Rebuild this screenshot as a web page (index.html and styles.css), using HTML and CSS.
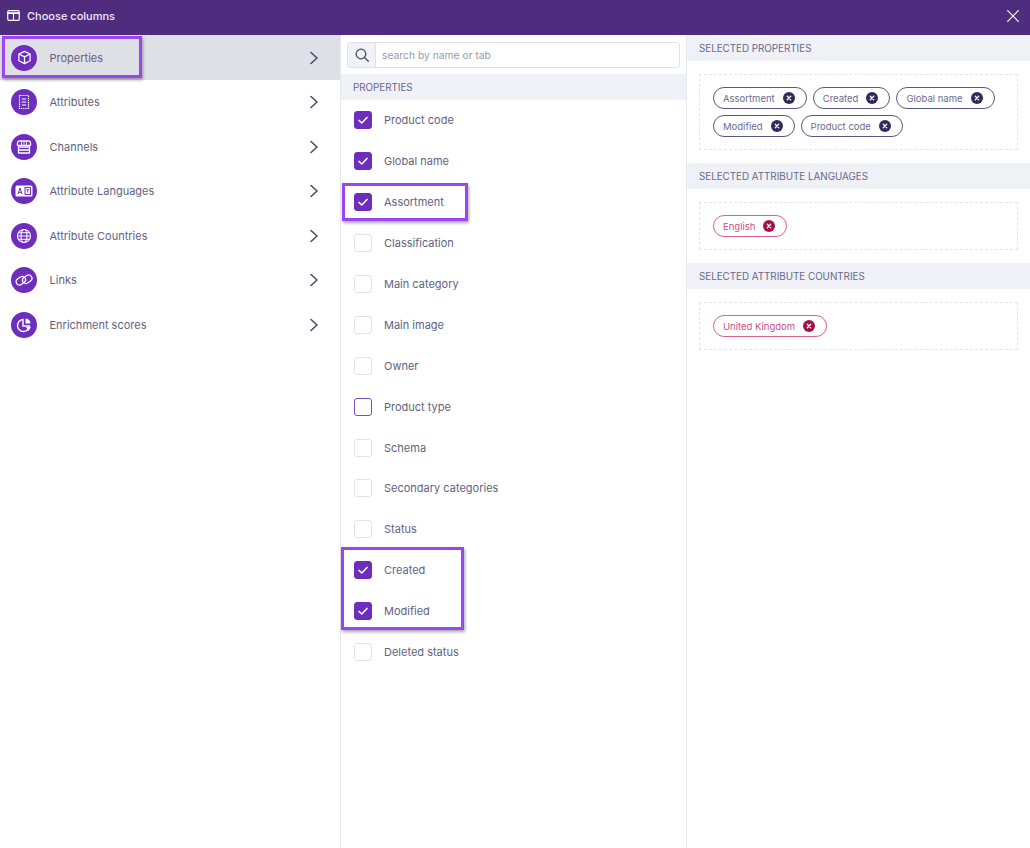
FILE: index.html
```html
<!DOCTYPE html>
<html lang="en">

<head>
    <meta charset="UTF-8">
    <meta name="viewport" content="width=device-width, initial-scale=1.0">
    <title>Choose columns</title>
    <link rel="stylesheet" href="styles.css">
</head>

<body>
    <svg class="sprite" width="0" height="0">
        <defs>
            <symbol id="check" viewBox="0 0 18 18">
                <path d="M5 9.4l2.8 2.6L13 6.4" fill="none" stroke="#fff" stroke-width="1.5" stroke-linecap="round" stroke-linejoin="round"/>
            </symbol>
            <symbol id="chevron" viewBox="0 0 10 14">
                <path d="M2 1.5L8 7l-6 5.5" fill="none" stroke="#4a4a6e" stroke-width="1.6" stroke-linecap="round" stroke-linejoin="round"/>
            </symbol>
            <symbol id="chip-x" viewBox="0 0 12 12">
                <circle cx="6" cy="6" r="6" fill="currentColor"/>
                <path d="M4.3 4.3l3.4 3.4M7.7 4.3L4.3 7.7" stroke="#fff" stroke-width="1.3" stroke-linecap="round"/>
            </symbol>
        </defs>
    </svg>

    <header class="top-bar">
        <div class="top-title">
            <svg class="top-icon" viewBox="0 0 14 12" width="13" height="11">
                <rect x="0.7" y="0.7" width="12.6" height="10.6" rx="1.5" fill="none" stroke="#fff" stroke-width="1.3"/>
                <path d="M0.7 3.4h12.6" stroke="#fff" stroke-width="2"/>
                <path d="M7 3v8" stroke="#fff" stroke-width="1.2"/>
            </svg>
            <span>Choose columns</span>
        </div>
        <svg class="close-icon" viewBox="0 0 12 12" width="12" height="12">
            <path d="M0.7 0.7l10.6 10.6M11.3 0.7L0.7 11.3" stroke="#fff" stroke-width="1.2" stroke-linecap="round"/>
        </svg>
    </header>

    <main class="columns">
        <nav class="tabs">
            <a class="tab active">
                <span class="tab-icon">
                    <svg viewBox="0 0 16 16" width="15" height="15" fill="none" stroke="#fff" stroke-width="1.3" stroke-linejoin="round">
                        <path d="M8 1.5l6 2.8v7.2l-6 3-6-3V4.300z"/>
                        <path d="M2 4.300l6 3 6-3M8 7.300v7.200"/>
                    </svg>
                </span>
                <span class="tab-label">Properties</span>
                <svg class="tab-arrow"><use href="#chevron"/></svg>
            </a>
            <a class="tab">
                <span class="tab-icon">
                    <svg viewBox="0 0 16 16" width="16" height="16" fill="none" stroke="#fff" stroke-width="1.2">
                        <path d="M3.500 1.500h9v13h-9z" stroke-dasharray="1.200 0.700"/>
                        <path d="M5.800 5h4.400M5.800 8h4.400M5.800 11h4.400"/>
                    </svg>
                </span>
                <span class="tab-label">Attributes</span>
                <svg class="tab-arrow"><use href="#chevron"/></svg>
            </a>
            <a class="tab">
                <span class="tab-icon">
                    <svg viewBox="0 0 16 16" width="16" height="16" fill="none" stroke="#fff" stroke-width="1.3" stroke-linejoin="round">
                        <path d="M3.500 2h9a2 2 0 0 1 2 2v2.500h-13V4a2 2 0 0 1 2-2z"/>
                        <path d="M5.500 2.500v3.500M8 2.500v3.500M10.500 2.500v3.500" stroke-width="0.900"/>
                        <path d="M2.500 8h11v6h-11zM2.500 11h11"/>
                    </svg>
                </span>
                <span class="tab-label">Channels</span>
                <svg class="tab-arrow"><use href="#chevron"/></svg>
            </a>
            <a class="tab">
                <span class="tab-icon">
                    <svg viewBox="0 0 18 14" width="18" height="14">
                        <rect x="0.500" y="1.500" width="17" height="11" rx="1.500" fill="#fff"/>
                        <path d="M3 10l2-6 2 6M3.800 8.300h2.400" fill="none" stroke="#6f2dbd" stroke-width="1"/>
                        <rect x="10" y="3.500" width="5.500" height="7" fill="none" stroke="#6f2dbd" stroke-width="1"/>
                        <path d="M11.500 5.500h2.500M12.700 5.500v3" stroke="#6f2dbd" stroke-width="0.900"/>
                    </svg>
                </span>
                <span class="tab-label">Attribute Languages</span>
                <svg class="tab-arrow"><use href="#chevron"/></svg>
            </a>
            <a class="tab">
                <span class="tab-icon">
                    <svg viewBox="0 0 16 16" width="16" height="16" fill="none" stroke="#fff" stroke-width="1.100">
                        <circle cx="8" cy="8" r="6.500"/>
                        <ellipse cx="8" cy="8" rx="3" ry="6.500"/>
                        <path d="M1.500 8h13M2.500 4.700h11M2.500 11.300h11"/>
                    </svg>
                </span>
                <span class="tab-label">Attribute Countries</span>
                <svg class="tab-arrow"><use href="#chevron"/></svg>
            </a>
            <a class="tab">
                <span class="tab-icon">
                    <svg viewBox="0 0 18 16" width="18" height="16" fill="none" stroke="#fff" stroke-width="1.300">
                        <rect x="0.800" y="5.500" width="10" height="6.500" rx="3.250" transform="rotate(-35 5.800 8.750)"/>
                        <rect x="7.200" y="4" width="10" height="6.500" rx="3.250" transform="rotate(-35 12.200 7.250)"/>
                    </svg>
                </span>
                <span class="tab-label">Links</span>
                <svg class="tab-arrow"><use href="#chevron"/></svg>
            </a>
            <a class="tab">
                <span class="tab-icon">
                    <svg viewBox="0 0 16 16" width="16" height="16" fill="none" stroke="#fff" stroke-width="1.400">
                        <path d="M7 2.500a6 6 0 1 0 6.500 6.500H7z"/>
                        <path d="M9.500 1.500a5 5 0 0 1 5 5h-5z" fill="#fff" stroke="none"/>
                        <path d="M10 10h5l-2.500 4z" fill="#fff" stroke="none"/>
                    </svg>
                </span>
                <span class="tab-label">Enrichment scores</span>
                <svg class="tab-arrow"><use href="#chevron"/></svg>
            </a>
        </nav>

        <section class="options">
            <div class="search">
                <span class="search-addon">
                    <svg viewBox="0 0 14 14" width="14" height="14" fill="none" stroke="#4a4a5e" stroke-width="1.300">
                        <circle cx="6" cy="6" r="4.800"/>
                        <path d="M9.500 9.500l3.800 3.800" stroke-linecap="round"/>
                    </svg>
                </span>
                <input class="search-input" type="text" placeholder="search by name or tab">
            </div>
            <h3 class="section-head">PROPERTIES</h3>
            <ul class="option-list">
                <li class="option"><span class="box checked"><svg><use href="#check"/></svg></span>Product code</li>
                <li class="option"><span class="box checked"><svg><use href="#check"/></svg></span>Global name</li>
                <li class="option"><span class="box checked"><svg><use href="#check"/></svg></span>Assortment</li>
                <li class="option"><span class="box"></span>Classification</li>
                <li class="option"><span class="box"></span>Main category</li>
                <li class="option"><span class="box"></span>Main image</li>
                <li class="option"><span class="box"></span>Owner</li>
                <li class="option"><span class="box hover"></span>Product type</li>
                <li class="option"><span class="box"></span>Schema</li>
                <li class="option"><span class="box"></span>Secondary categories</li>
                <li class="option"><span class="box"></span>Status</li>
                <li class="option"><span class="box checked"><svg><use href="#check"/></svg></span>Created</li>
                <li class="option"><span class="box checked"><svg><use href="#check"/></svg></span>Modified</li>
                <li class="option"><span class="box"></span>Deleted status</li>
            </ul>
        </section>

        <aside class="selected">
            <h3 class="section-head">SELECTED PROPERTIES</h3>
            <div class="chip-box">
                <span class="chip">Assortment<svg><use href="#chip-x"/></svg></span>
                <span class="chip">Created<svg><use href="#chip-x"/></svg></span>
                <span class="chip">Global name<svg><use href="#chip-x"/></svg></span>
                <span class="chip">Modified<svg><use href="#chip-x"/></svg></span>
                <span class="chip">Product code<svg><use href="#chip-x"/></svg></span>
            </div>
            <h3 class="section-head">SELECTED ATTRIBUTE LANGUAGES</h3>
            <div class="chip-box">
                <span class="chip pink">English<svg><use href="#chip-x"/></svg></span>
            </div>
            <h3 class="section-head">SELECTED ATTRIBUTE COUNTRIES</h3>
            <div class="chip-box">
                <span class="chip pink">United Kingdom<svg><use href="#chip-x"/></svg></span>
            </div>
        </aside>
    </main>

    <!-- highlight frames drawn over the screenshot -->
    <div class="mark mark-tab"></div>
    <div class="mark mark-assortment"></div>
    <div class="mark mark-dates"></div>
</body>

</html>
```

FILE: styles.css
```css
* {
    margin: 0;
    padding: 0;
    box-sizing: border-box;
    font-family: 'Inter', 'Open Sans', sans-serif;
}

html,
body {
    height: 848px;
    overflow: hidden;
}

body {
    background: white;
    color: #625f80;
    position: relative;
    font-size: 11px;
}

.sprite {
    position: absolute;
}

.top-bar {
    height: 35px;
    background: #4f2c7e;
    color: white;
    display: flex;
    justify-content: space-between;
    align-items: center;
    padding: 0 11px 4px 7px;
}

.top-title {
    display: flex;
    align-items: center;
    gap: 7px;
    font-size: 11px;
    font-weight: 500;
    color: #efeaf5;
}

.columns {
    display: flex;
    height: 813px;
}

.tabs {
    width: 341px;
    border-right: 1px solid #e8e9ef;
}

.tab {
    height: 44.5px;
    display: flex;
    align-items: center;
    padding: 1px 21px 0 11px;
}

.tab.active {
    background: #dee0e5;
}

.tab-icon {
    width: 26px;
    height: 26px;
    border-radius: 50%;
    background: #6f2dbd;
    display: flex;
    justify-content: center;
    align-items: center;
    margin-right: 12.5px;
}

.tab-label {
    flex: 1;
}

.tab-arrow {
    width: 10px;
    height: 14px;
}

.options {
    width: 346px;
    border-right: 1px solid #e8e9ef;
}

.search {
    display: flex;
    height: 26px;
    margin: 7px 6px 6px;
    border: 1px solid #dfe1e8;
    border-radius: 3px;
    overflow: hidden;
}

.search-addon {
    width: 28px;
    background: #f1f2f7;
    border-right: 1px solid #dfe1e8;
    display: flex;
    justify-content: center;
    align-items: center;
}

.search-input {
    flex: 1;
    min-width: 0;
    border: none;
    outline: none;
    padding: 0 6px;
    font-size: 10.3px;
}

.search-input::placeholder {
    color: #9a9aa8;
}

.section-head {
    height: 26px;
    line-height: 28px;
    background: #f0f1f7;
    font-size: 9.8px;
    font-weight: 400;
    color: #67678a;
    padding-left: 12px;
}

.option-list {
    list-style: none;
}

.option {
    height: 40.9px;
    display: flex;
    align-items: center;
    padding-left: 13px;
    gap: 12px;
}

.box {
    width: 18px;
    height: 18px;
    border: 1px solid #e2e3ea;
    border-radius: 3px;
    flex: none;
}

.box.checked {
    background: #6f2dbd;
    border-color: #6f2dbd;
}

.box.hover {
    border-color: #7a4cc0;
}

.box svg {
    display: block;
    width: 18px;
    height: 18px;
    margin: -1px;
}

.selected {
    flex: 1;
}

.chip-box {
    margin: 13px 12px;
    padding: 12px 13px;
    border: 1px dashed #e4e5ea;
    display: flex;
    flex-wrap: wrap;
    gap: 6px;
}

.chip {
    height: 22px;
    display: flex;
    align-items: center;
    gap: 8px;
    padding: 0 11px 0 9px;
    border: 1px solid #5a5785;
    border-radius: 11px;
    font-size: 9.5px;
    color: #6b6b8c;
}

.chip svg {
    width: 12px;
    height: 12px;
    color: #2f2b5e;
}

.chip.pink {
    border-color: #d9608f;
    color: #cf4c86;
}

.chip.pink svg {
    color: #a3104f;
}

.mark {
    position: absolute;
    border: 3px solid #9b45f2;
    box-shadow: 1px 2px 3px rgba(0, 0, 0, 0.35);
}

.mark-tab {
    left: 2px;
    top: 36px;
    width: 140px;
    height: 42px;
}

.mark-assortment {
    left: 342px;
    top: 183px;
    width: 126px;
    height: 38px;
}

.mark-dates {
    left: 341px;
    top: 547px;
    width: 123px;
    height: 83px;
}
```
